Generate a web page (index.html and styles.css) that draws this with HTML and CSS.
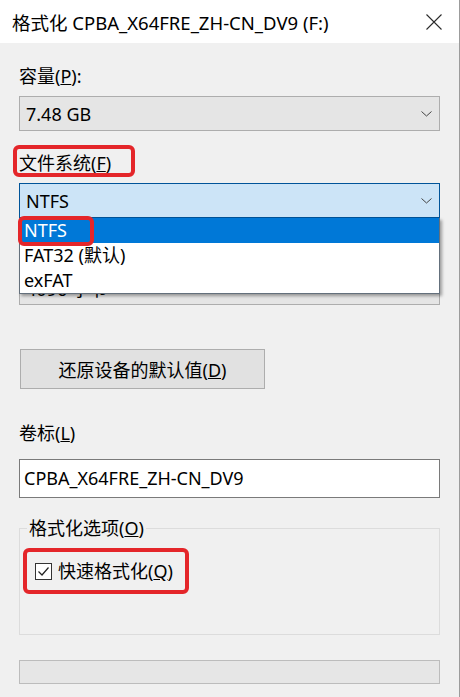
FILE: index.html
```html
<!DOCTYPE html>
<html lang="zh-CN">

<head>
    <meta charset="UTF-8">
    <title>格式化</title>
    <link rel="stylesheet" href="styles.css">
</head>

<body>
    <div class="dialog">
        <div class="titlebar">
            <span class="title">格式化 CPBA_X64FRE_ZH-CN_DV9 (F:)</span>
            <svg class="close" width="16" height="16" viewBox="0 0 16 16">
                <path d="M0.5 0.5 L15.5 15.5 M15.5 0.5 L0.5 15.5" stroke="#2b2b2b" stroke-width="1.1" fill="none"/>
            </svg>
        </div>

        <div class="content">
            <div class="field">
                <label class="lbl">容量(<u>P</u>):</label>
                <div class="combo">
                    <span>7.48 GB</span>
                    <svg class="chev" width="11" height="6" viewBox="0 0 11 6"><path d="M0.5 0.5 L5.5 5 L10.5 0.5" stroke="#444" fill="none"/></svg>
                </div>
            </div>

            <div class="field">
                <label class="lbl"><span class="marked mark-fs">文件系统(<u>F</u>)</span></label>
                <div class="combo-wrap">
                    <div class="combo active">
                        <span>NTFS</span>
                        <svg class="chev" width="11" height="6" viewBox="0 0 11 6"><path d="M0.5 0.5 L5.5 5 L10.5 0.5" stroke="#444" fill="none"/></svg>
                    </div>
                    <ul class="dropdown">
                        <li class="selected"><span class="marked mark-item">NTFS</span></li>
                        <li>FAT32 (默认)</li>
                        <li>exFAT</li>
                    </ul>
                </div>
            </div>

            <div class="field">
                <label class="lbl">分配单元大小(<u>A</u>)</label>
                <div class="combo">
                    <span>4096 字节</span>
                    <svg class="chev" width="11" height="6" viewBox="0 0 11 6"><path d="M0.5 0.5 L5.5 5 L10.5 0.5" stroke="#444" fill="none"/></svg>
                </div>
            </div>

            <button class="btn">还原设备的默认值(<u>D</u>)</button>

            <div class="field volume">
                <label class="lbl">卷标(<u>L</u>)</label>
                <div class="textbox">CPBA_X64FRE_ZH-CN_DV9</div>
            </div>

            <fieldset class="group">
                <legend>格式化选项(<u>O</u>)</legend>
                <label class="check marked mark-check">
                    <span class="box">
                        <svg width="15" height="15" viewBox="0 0 15 15"><path d="M2.5 7.5 L6 11 L12.5 3.5" stroke="#222" stroke-width="1.2" fill="none"/></svg>
                    </span>
                    <span>快速格式化(<u>Q</u>)</span>
                </label>
            </fieldset>

            <div class="progress"></div>
        </div>
    </div>
</body>

</html>
```

FILE: styles.css
```css
body {
    margin: 0;
    background: #f0f0f0;
    font-family: "Noto Sans", "Noto Sans CJK SC", sans-serif;
    font-size: 18px;
    color: #000;
}

.dialog {
    width: 459px;
    height: 697px;
    border-right: 1px solid #9c9c9c;
    background: #f0f0f0;
}

.titlebar {
    height: 43px;
    background: #fff;
    display: flex;
    align-items: center;
    justify-content: space-between;
    padding: 0 17px 0 12px;
}

.title {
    font-size: 18.5px;
    white-space: nowrap;
}

.close {
    display: block;
}

.content {
    padding: 21px 19px 0 19px;
}

.field {
    margin-bottom: 20px;
}

.lbl {
    display: block;
    height: 24px;
    line-height: 24px;
    margin-bottom: 8px;
}

.combo {
    height: 35px;
    box-sizing: border-box;
    border: 1px solid #adadad;
    background: #e5e5e5;
    display: flex;
    align-items: center;
    justify-content: space-between;
    padding: 0 7px 0 6px;
}

.combo.active {
    background: #cce4f7;
    border-color: #005499;
}

.chev {
    display: block;
}

.combo-wrap {
    position: relative;
}

.dropdown {
    position: absolute;
    top: 35px;
    left: 0;
    right: 0;
    z-index: 5;
    margin: 0;
    padding: 0;
    list-style: none;
    background: #fff;
    border: 1px solid #64707c;
    border-top: none;
    box-shadow: 2px 2px 3px rgba(0, 0, 0, 0.35);
}

.dropdown li {
    height: 25px;
    line-height: 25px;
    padding-left: 4px;
}

.dropdown li.selected {
    background: #0078d7;
    color: #fff;
}

.btn {
    display: block;
    margin: 44px 0 0 1px;
    width: 245px;
    height: 40px;
    border: 1px solid #adadad;
    background: #e1e1e1;
    font: inherit;
    color: #000;
}

.volume {
    margin-top: 32px;
    margin-bottom: 0;
}

.volume .lbl {
    margin-bottom: 14px;
}

.textbox {
    height: 39px;
    box-sizing: border-box;
    border: 1px solid #7a7a7a;
    background: #fff;
    padding-left: 4px;
    line-height: 37px;
}

.group {
    margin: 18px 0 0 0;
    padding: 0 0 0 7px;
    height: 119px;
    box-sizing: border-box;
    border: 1px solid #dcdcdc;
}

.group legend {
    padding: 0 2px;
    line-height: 24px;
}

.check {
    display: inline-flex;
    align-items: center;
    gap: 6px;
    margin: 19px 0 0 8px;
    height: 24px;
    line-height: 24px;
}

.box {
    width: 17px;
    height: 17px;
    box-sizing: border-box;
    border: 1px solid #333;
    background: #fff;
    display: flex;
    align-items: center;
    justify-content: center;
}

.box svg {
    display: block;
}

.progress {
    margin-top: 25px;
    height: 24px;
    box-sizing: border-box;
    border: 1px solid #bcbcbc;
    background: #e6e6e6;
}

/* red annotation frames */
.marked {
    position: relative;
    display: inline-block;
}

.marked::after {
    content: "";
    position: absolute;
    border: 4px solid #e4262a;
    border-radius: 6px;
}

.mark-fs::after {
    top: -6px;
    bottom: -2px;
    left: -6px;
    right: -24px;
}

.mark-item {
    line-height: 25px;
}

.mark-item::after {
    top: -2px;
    bottom: -3px;
    left: -6px;
    right: -27px;
}

.mark-check {
    display: inline-flex;
}

.mark-check::after {
    top: -11px;
    bottom: -11px;
    left: -12px;
    right: -16px;
}
```
